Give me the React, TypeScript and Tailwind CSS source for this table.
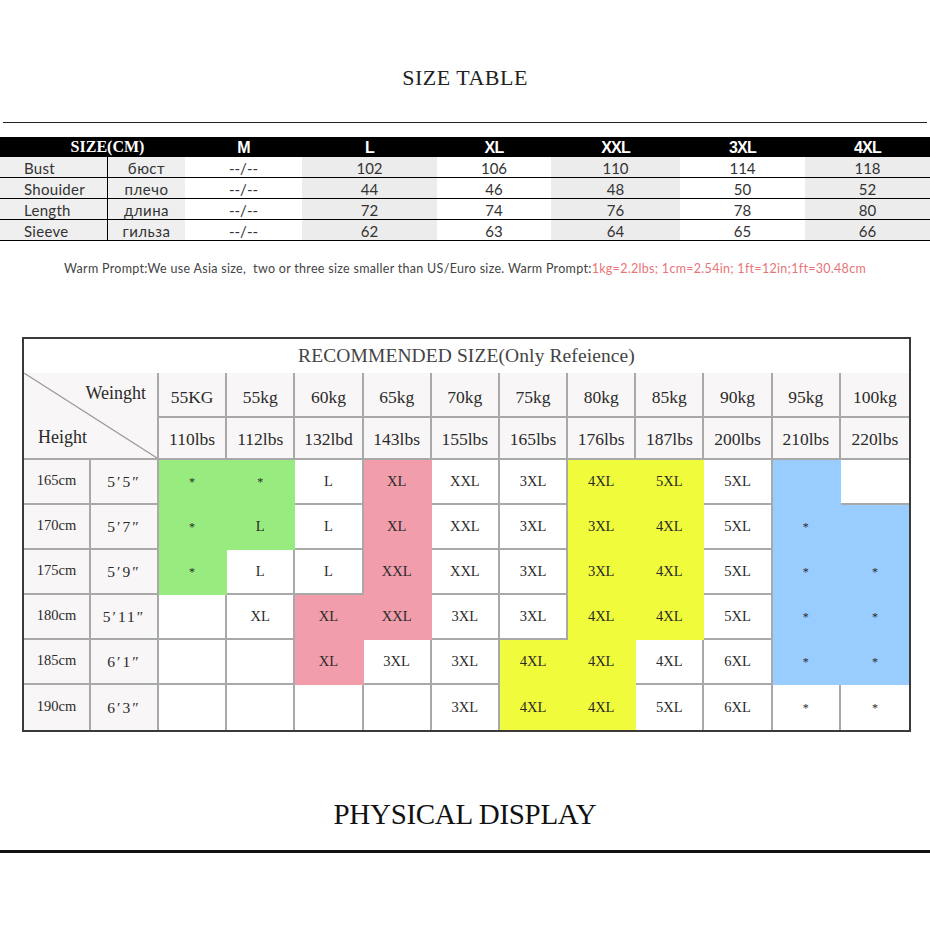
import React from 'react';

type Tone = 'w' | 'g' | 'p' | 'y' | 'b';

const toneClass: Record<Tone, string> = {
  w: 'bg-white border-[#a9a9a9]',
  g: 'bg-[#98ec7f] border-[#98ec7f]',
  p: 'bg-[#f19dab] border-[#f19dab]',
  y: 'bg-[#f0fb3c] border-[#f0fb3c]',
  b: 'bg-[#99ccff] border-[#99ccff]',
};

const sizeCols = ['M', 'L', 'XL', 'XXL', '3XL', '4XL'];
const greyCol = [false, true, false, true, false, true];

const measures = [
  { en: 'Bust', ru: 'бюст', vals: ['--/--', '102', '106', '110', '114', '118'] },
  { en: 'Shouider', ru: 'плечо', vals: ['--/--', '44', '46', '48', '50', '52'] },
  { en: 'Length', ru: 'длина', vals: ['--/--', '72', '74', '76', '78', '80'] },
  { en: 'Sieeve', ru: 'гильза', vals: ['--/--', '62', '63', '64', '65', '66'] },
];

const kg = ['55KG', '55kg', '60kg', '65kg', '70kg', '75kg', '80kg', '85kg', '90kg', '95kg', '100kg'];
const lbs = ['110lbs', '112lbs', '132lbd', '143lbs', '155lbs', '165lbs', '176lbs', '187lbs', '200lbs', '210lbs', '220lbs'];

// [text, tone] per weight column
const rec: { cm: string; ft: string; cells: [string, Tone][] }[] = [
  {
    cm: '165cm', ft: '5′5″',
    cells: [['*', 'g'], ['*', 'g'], ['L', 'w'], ['XL', 'p'], ['XXL', 'w'], ['3XL', 'w'], ['4XL', 'y'], ['5XL', 'y'], ['5XL', 'w'], ['', 'b'], ['', 'w']],
  },
  {
    cm: '170cm', ft: '5′7″',
    cells: [['*', 'g'], ['L', 'g'], ['L', 'w'], ['XL', 'p'], ['XXL', 'w'], ['3XL', 'w'], ['3XL', 'y'], ['4XL', 'y'], ['5XL', 'w'], ['*', 'b'], ['', 'b']],
  },
  {
    cm: '175cm', ft: '5′9″',
    cells: [['*', 'g'], ['L', 'w'], ['L', 'w'], ['XXL', 'p'], ['XXL', 'w'], ['3XL', 'w'], ['3XL', 'y'], ['4XL', 'y'], ['5XL', 'w'], ['*', 'b'], ['*', 'b']],
  },
  {
    cm: '180cm', ft: '5′11″',
    cells: [['', 'w'], ['XL', 'w'], ['XL', 'p'], ['XXL', 'p'], ['3XL', 'w'], ['3XL', 'w'], ['4XL', 'y'], ['4XL', 'y'], ['5XL', 'w'], ['*', 'b'], ['*', 'b']],
  },
  {
    cm: '185cm', ft: '6′1″',
    cells: [['', 'w'], ['', 'w'], ['XL', 'p'], ['3XL', 'w'], ['3XL', 'w'], ['4XL', 'y'], ['4XL', 'y'], ['4XL', 'w'], ['6XL', 'w'], ['*', 'b'], ['*', 'b']],
  },
  {
    cm: '190cm', ft: '6′3″',
    cells: [['', 'w'], ['', 'w'], ['', 'w'], ['', 'w'], ['3XL', 'w'], ['4XL', 'y'], ['4XL', 'y'], ['5XL', 'w'], ['6XL', 'w'], ['*', 'w'], ['*', 'w']],
  },
];

const SizeTable = () => (
  <div className="w-full">
    <div className="grid h-[20px] grid-cols-[107px_78px_117px_135px_114px_129px_125px_125px] items-center bg-black text-white">
      <div className="col-span-2 pl-[30px] text-center font-['Liberation_Serif',serif] text-[16px] font-bold leading-none">
        SIZE(CM)
      </div>
      {sizeCols.map((s) => (
        <div key={s} className="pt-[2px] text-center font-['Liberation_Sans',sans-serif] text-[16px] font-bold leading-none tracking-[-0.8px]">
          {s}
        </div>
      ))}
    </div>
    {measures.map((m) => (
      <div
        key={m.en}
        className="grid h-[21px] grid-cols-[107px_78px_117px_135px_114px_129px_125px_125px] border-b border-black font-['Lato',sans-serif] text-[15px] leading-none text-[#333]"
      >
        <div className="flex items-center bg-[#efefef] pt-[3px] pl-[24px] tracking-[0.3px]">{m.en}</div>
        <div className="flex items-center justify-center border-l border-black bg-[#efefef] pt-[3px] tracking-[0.5px]">{m.ru}</div>
        {m.vals.map((v, i) => (
          <div key={i} className={`flex items-center justify-center pt-[3px] ${greyCol[i] ? 'bg-[#ececec]' : 'bg-white'}`}>
            {v}
          </div>
        ))}
      </div>
    ))}
  </div>
);

const RecommendTable = () => (
  <div className="ml-[22px] w-[889px] border-2 border-[#3a3a3a] bg-white font-['Liberation_Serif',serif] text-[#2a2a2a]">
    <div className="flex h-[34px] items-center justify-center text-[19.5px] tracking-[0.1px] text-[#444]">
      RECOMMENDED SIZE(Only Refeience)
    </div>
    <div className="grid grid-cols-[67px_68px_repeat(11,minmax(0,1fr))]">
      <div className="relative col-span-2 row-span-2 border-r-2 border-b-2 border-[#a9a9a9] bg-[#f8f6f6]">
        <svg className="absolute inset-0 h-full w-full" preserveAspectRatio="none" viewBox="0 0 100 100">
          <line x1="0" y1="0" x2="100" y2="100" stroke="#9a9a9a" strokeWidth="1.2" vectorEffect="non-scaling-stroke" />
        </svg>
        <div className="relative flex h-full flex-col justify-between pt-[11px] pb-[12px]">
          <div className="pr-[11px] text-right text-[18px] leading-none">Weinght</div>
          <div className="pl-[14px] text-[18px] leading-none">Height</div>
        </div>
      </div>
      {kg.map((k, i) => (
        <div
          key={k + i}
          className={`flex h-[45px] items-center justify-center border-b-2 border-[#a9a9a9] bg-[#f8f6f6] pt-[5px] text-[17.5px] ${i < 10 ? 'border-r-2' : ''}`}
        >
          {k}
        </div>
      ))}
      {lbs.map((l, i) => (
        <div
          key={l}
          className={`flex h-[42px] items-center justify-center border-b-2 border-[#a9a9a9] bg-[#f8f6f6] pt-[3px] text-[17.5px] ${i < 10 ? 'border-r-2' : ''}`}
        >
          {l}
        </div>
      ))}
      {rec.map((r, ri) => {
        const last = ri === rec.length - 1;
        return (
          <React.Fragment key={r.cm}>
            <div className={`flex h-[45px] items-center justify-center border-r-2 border-[#a9a9a9] bg-[#f8f6f6] text-[14.5px] ${last ? '' : 'border-b-2'}`}>
              {r.cm}
            </div>
            <div className={`flex h-[45px] items-center justify-center border-r-2 border-[#a9a9a9] bg-[#f8f6f6] text-[15.5px] tracking-[2px] ${last ? '' : 'border-b-2'}`}>
              {r.ft}
            </div>
            {r.cells.map(([t, tone], ci) => (
              <div
                key={ci}
                className={`flex h-[45px] items-center justify-center pt-[2px] ${toneClass[tone]} ${ci < 10 ? 'border-r-2' : ''} ${last ? '' : 'border-b-2'} ${t === '*' ? 'text-[12px]' : 'text-[14.5px]'}`}
              >
                {t}
              </div>
            ))}
          </React.Fragment>
        );
      })}
    </div>
  </div>
);

export default function App() {
  return (
    <div className="w-[930px] bg-white pb-[76px]">
      <div className="mt-[63px] flex h-[28px] items-center justify-center font-['Liberation_Serif',serif] text-[22px] tracking-[0.5px] text-[#222]">
        SIZE TABLE
      </div>
      <div className="mx-[3px] mt-[31px] h-px bg-[#222]" />
      <div className="mt-[14px]">
        <SizeTable />
      </div>
      <div className="mt-[19px] text-center font-['Lato',sans-serif] text-[12.5px] tracking-[0.3px] text-[#444]">
        Warm Prompt:We use Asia size,&nbsp; two or three size smaller than US/Euro size. Warm Prompt:
        <span className="text-[#e87478]">1kg=2.2lbs; 1cm=2.54in; 1ft=12in;1ft=30.48cm</span>
      </div>
      <div className="mt-[58px]">
        <RecommendTable />
      </div>
      <div className="mt-[66px] text-center font-['Liberation_Serif',serif] text-[29px] leading-[32px] tracking-[-0.3px] text-[#111]">
        PHYSICAL DISPLAY
      </div>
      <div className="mt-[20px] h-[3px] w-full bg-[#111]" />
    </div>
  );
}
